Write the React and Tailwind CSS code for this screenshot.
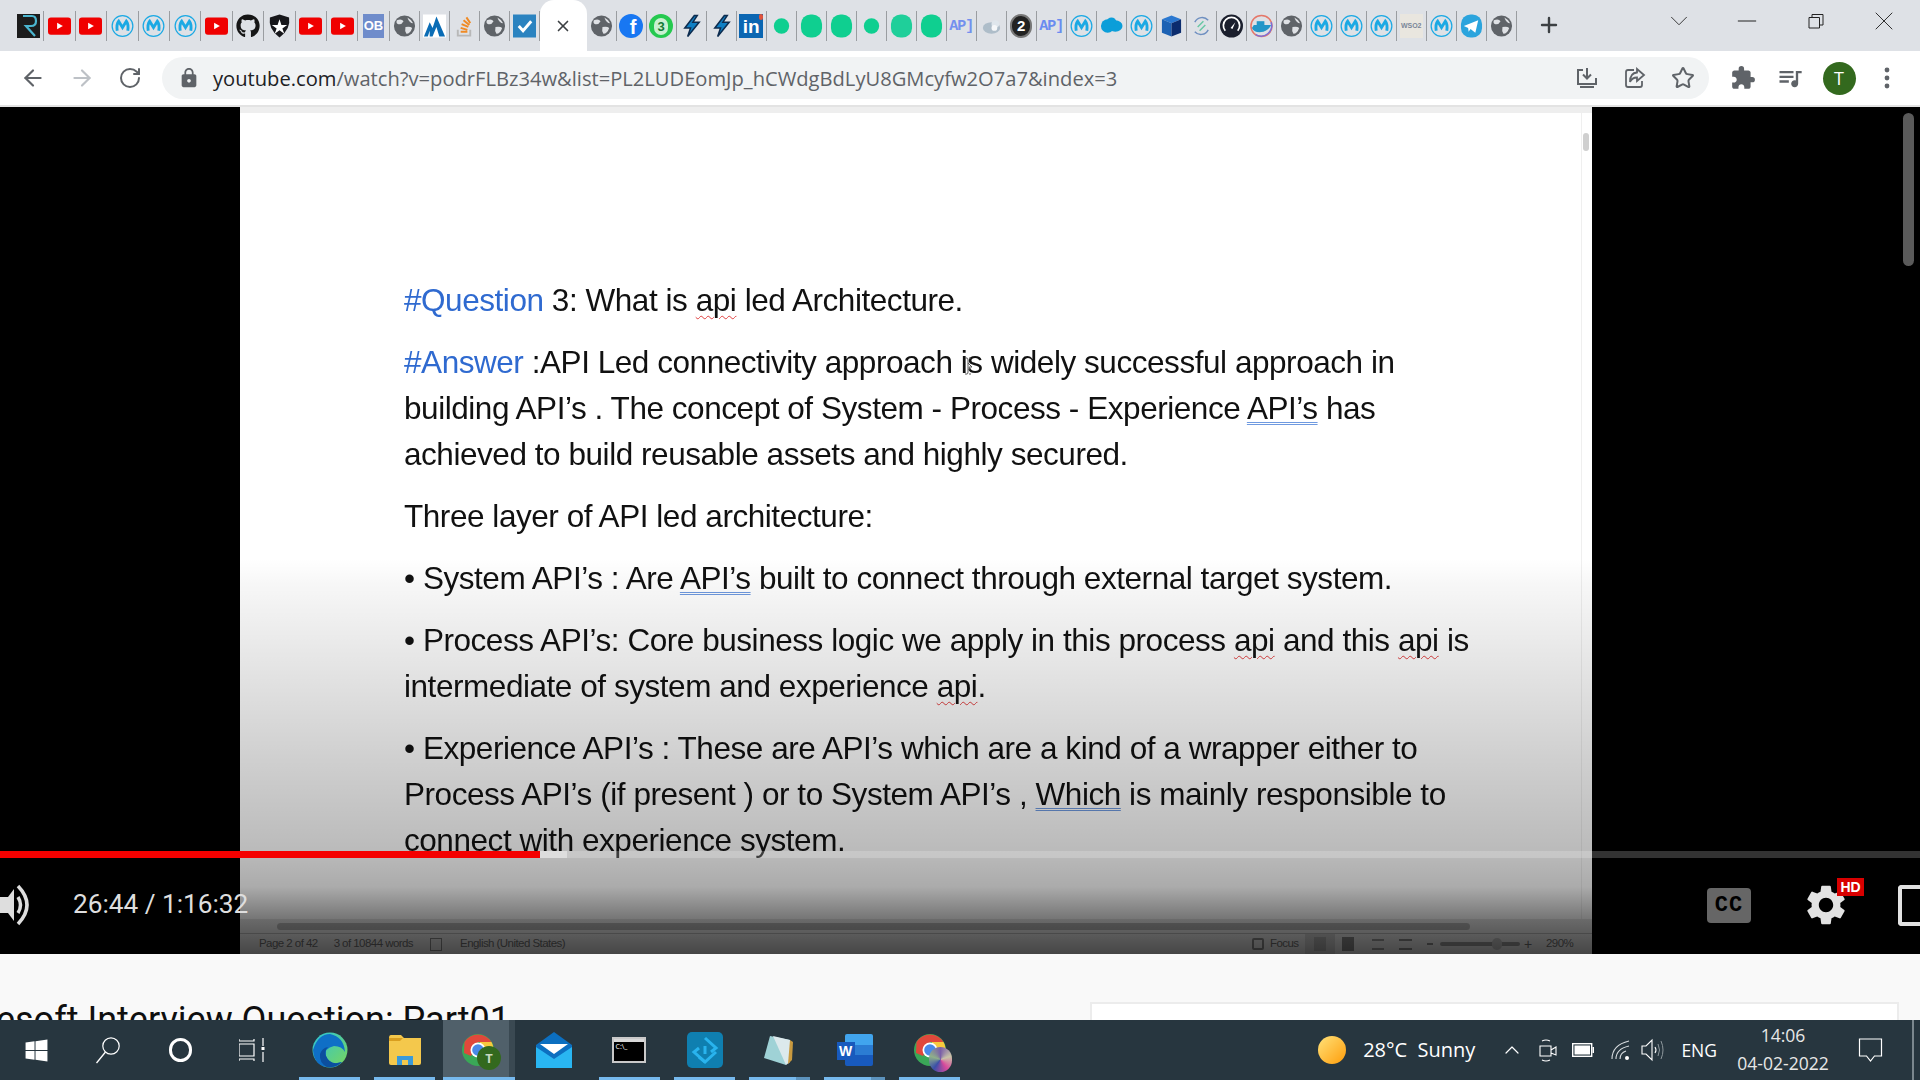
import React from "react";
import { ArrowLeft, ArrowRight, RotateCw, Star, ChevronUp, Minus, X, Plus, ChevronDown } from "lucide-react";
import { FaGithub, FaWindows } from "react-icons/fa";
import { MdQueueMusic, MdSettings, MdLock, MdExtension } from "react-icons/md";

const S = ({ children, vb = "0 0 24 24", cls = "w-[23px] h-[24px]" }) => (
  <svg viewBox={vb} className={cls}>{children}</svg>
);

const Mule = () => (
  <S>
    <circle cx="12" cy="12" r="10.8" fill="none" stroke="#1ba9e4" strokeWidth="1.3" />
    <path d="M6.5 17 Q5.5 10 8 7 L12 13.5 L16 7 Q18.5 10 17.5 17" fill="none" stroke="#1ba9e4" strokeWidth="3" />
  </S>
);
const Yt = () => (
  <S>
    <rect x="0" y="3" width="24" height="18" rx="3" fill="#f00000" />
    <polygon points="9.5,8.5 9.5,15.5 15.5,12" fill="#fff" />
  </S>
);
const Globe = () => (
  <S>
    <circle cx="12" cy="12" r="11" fill="#5f6368" />
    <path d="M4 6 Q9 4 11 7 Q9 11 5 10 Q3 9 4 6Z M13 13 Q18 12 20 14 Q18 20 14 20 Q12 17 13 13Z M15 3 Q19 5 21 9 Q17 9 15 3Z" fill="#dfe1e5" />
  </S>
);
const DotS = () => <S><circle cx="12" cy="12" r="8" fill="#0fcf90" /></S>;
const DotL = ({ c = "#0fcf90" }) => <S><rect x="1" y="0" width="22" height="24" rx="10" fill={c} /></S>;
const Api = ({ c = "#7390ee" }) => (
  <span className="font-['Liberation_Mono',monospace] font-bold text-[15px] tracking-[-1px] leading-none" style={{ color: c }}>AP]</span>
);
const Bolt = () => (
  <S><polygon points="15,1 5,14 11,14 8,23 20,8 13.5,8 18,1" fill="#0f7fc4" stroke="#0d2c4f" strokeWidth="1.6" /></S>
);

const fav = {
  r: () => (
    <div className="w-[23px] h-[24px] bg-[#1c1c1c] flex items-center justify-center">
      <svg viewBox="0 0 23 24" className="w-full h-full"><path d="M6 2 H15 Q19 2 19 7 Q19 12 14 12 H9 L18 22" fill="none" stroke="#4bb6d0" strokeWidth="2.2" /></svg>
    </div>
  ),
  yt: Yt, m: Mule, g: Globe,
  gh: () => <FaGithub className="w-[24px] h-[24px] text-[#161616]" />,
  a0: () => (
    <S><path d="M12 0 L22 3 Q24 15 12 24 Q0 15 2 3Z" fill="#16161a" /><polygon points="12,5 14,11 20,11 15,14.5 17,20 12,16.5 7,20 9,14.5 4,11 10,11" fill="#fff" /></S>
  ),
  ob: () => <div className="w-[21px] h-[24px] bg-[#6f8ccb] text-white font-bold text-[13px] flex items-center justify-center font-['Liberation_Sans',sans-serif]">OB</div>,
  mt: () => (
    <S><rect width="24" height="24" fill="#fff" /><path d="M1 23 L7 8 L10 14 L14 2 L23 23 H17 L14 13 L10 23 H7 L7 17 L5 23Z" fill="#0a6cb5" /></S>
  ),
  so: () => (
    <S><path d="M5 16 V22 H18 V16" fill="none" stroke="#b8b8b8" strokeWidth="2" /><path d="M8 18 H15 M8 14 L15 16 M9 10 L16 13 M11 6 L17 11 M14 3 L18 9" stroke="#f08a24" strokeWidth="2" /></S>
  ),
  ck: () => (
    <S><rect width="24" height="24" fill="#2b83c0" /><path d="M6 12 L10.5 17 L19 7" fill="none" stroke="#fff" strokeWidth="3" /></S>
  ),
  fb: () => (
    <div className="w-[24px] h-[24px] rounded-full bg-[#1877f2] text-white font-bold text-[20px] leading-[26px] pl-[4px] text-center font-['Liberation_Sans',sans-serif]">f</div>
  ),
  wa: () => (
    <div className="w-[24px] h-[24px] rounded-full bg-[#25c94f] flex items-center justify-center">
      <div className="w-[14px] h-[17px] rounded-full bg-[#c9f0d0] text-[#137a33] font-bold text-[13px] leading-[17px] text-center font-['Liberation_Sans',sans-serif]">3</div>
    </div>
  ),
  b: Bolt,
  li: () => (
    <div className="relative w-[24px] h-[24px] bg-[#0b66b2] text-white font-bold text-[19px] leading-[25px] text-center font-['Liberation_Sans',sans-serif]">
      in<span className="absolute top-0 right-0 w-[4px] h-[6px] bg-[#e0533c] rounded-full" />
    </div>
  ),
  ds: DotS, dl: DotL,
  dl2: () => <DotL c="#1fcf9a" />,
  api: Api,
  api2: () => <Api c="#6a8cf0" />,
  cl: () => (
    <S><ellipse cx="12" cy="14" rx="9" ry="6" fill="#aebdc9" /><ellipse cx="16" cy="10" rx="4" ry="4" fill="#dfe6ec" /><circle cx="15" cy="14" r="3" fill="#f5f7f9" /></S>
  ),
  two: () => (
    <div className="w-[22px] h-[24px] rounded-full bg-[#222] text-white font-bold text-[15px] leading-[20px] text-center font-['Liberation_Sans',sans-serif] border-2 border-[#777]">2</div>
  ),
  sf: () => (
    <S><ellipse cx="8" cy="12" rx="7" ry="7" fill="#0b9ed9" /><ellipse cx="16" cy="12" rx="7.5" ry="6" fill="#0b9ed9" /><circle cx="12" cy="8" r="5" fill="#0b9ed9" /></S>
  ),
  cb: () => (
    <S><polygon points="12,1 22,5 12,9 2,5" fill="#2b78d0" /><polygon points="2,5 12,9 12,23 2,19" fill="#1d62b4" /><polygon points="22,5 12,9 12,23 22,19" fill="#0b2c6e" /></S>
  ),
  sw: () => (
    <S><path d="M5 8 A9 10 0 0 1 19 6" fill="none" stroke="#6e8fc0" strokeWidth="1.5" /><path d="M19 16 A9 10 0 0 1 5 18" fill="none" stroke="#6e8fc0" strokeWidth="1.5" /><path d="M8 13 L14 7 M10 17 L16 11" stroke="#67c7a4" strokeWidth="1.5" /></S>
  ),
  ga: () => (
    <S><circle cx="12" cy="12" r="12" fill="#1b1f2d" /><path d="M5.5 17 A8.5 8.5 0 1 1 18.5 17" fill="none" stroke="#fff" strokeWidth="1.8" /><path d="M11 14 L16 8 L13 15Z" fill="#fff" /></S>
  ),
  dk: () => (
    <S><circle cx="12" cy="12" r="11" fill="none" stroke="#e5786a" strokeWidth="1.6" /><path d="M22 8 A11 11 0 0 1 6 21" fill="none" stroke="#7c6fd6" strokeWidth="1.6" /><path d="M2 14 Q5 20 14 18 Q20 16 22 11 H4Z" fill="#2496c8" /><rect x="7" y="7" width="8" height="4" fill="#2496c8" /></S>
  ),
  ws: () => (
    <div className="w-[23px] h-[24px] bg-[#e9e6df] text-[#7a869a] text-[7px] leading-[24px] text-center font-['Liberation_Sans',sans-serif] font-bold">WSO2</div>
  ),
  tg: () => (
    <S><rect width="22" height="24" x="1" rx="10" fill="#2ba4dd" /><polygon points="4,12 19,6 16,19 11,15 9,18 8.5,14" fill="#fff" /></S>
  ),
};

const tabsA = ["r", "yt", "yt", "m", "m", "m", "yt", "gh", "a0", "yt", "yt", "ob"];
const tabsB = ["g", "mt", "so", "g", "ck"];
const tabsC = ["g", "fb", "wa", "b", "b", "li", "ds", "dl", "dl", "ds", "dl2", "dl", "api", "cl", "two", "api2", "m", "sf", "m", "cb", "sw", "ga", "dk", "g", "m", "m", "m", "ws", "m", "tg", "g"];

function Tab({ k, wide }) {
  const I = fav[k];
  return (
    <div className={`${wide ? "w-[31.4px]" : "w-[30px]"} h-[30px] border-r border-[#9a9da1] flex items-center justify-center shrink-0`}>
      <I />
    </div>
  );
}

function TabStrip() {
  return (
    <div className="h-[51px] bg-[#dee1e6] flex items-start pl-[13px] shrink-0">
      <div className="flex mt-[11px]">
        {tabsA.map((k, i) => <Tab key={i} k={k} wide />)}
        {tabsB.map((k, i) => <Tab key={i} k={k} />)}
      </div>
      <div className="w-[47px] h-[51px] bg-white rounded-t-[14px] flex items-center justify-center shrink-0">
        <X className="w-[18px] h-[18px] text-[#3c4043]" strokeWidth={2.2} />
      </div>
      <div className="flex mt-[11px]">
        {tabsC.map((k, i) => <Tab key={i} k={k} />)}
      </div>
      <div className="ml-[20px] mt-[13px] w-[24px] flex justify-center"><Plus className="w-[24px] h-[24px] text-[#3c4043]" strokeWidth={2.4} /></div>
      <div className="flex items-center mt-[5px] ml-[84px] text-[#222]">
        <div className="w-[68.5px] flex justify-center"><ChevronDown className="w-[30px] h-[30px]" strokeWidth={0.7} /></div>
        <div className="w-[68.5px] flex justify-center"><Minus className="w-[30px] h-[30px]" strokeWidth={0.8} /></div>
        <div className="w-[68.5px] flex justify-center"><svg viewBox="0 0 16 16" className="w-[16px] h-[18px]"><path d="M1 4.5 H11.5 V15 H1Z M4 4.5 V1.5 H15 V12 H11.5" fill="none" stroke="#222" strokeWidth="1" /></svg></div>
        <div className="w-[68.5px] flex justify-center"><X className="w-[32px] h-[32px]" strokeWidth={0.7} /></div>
      </div>
    </div>
  );
}

function Toolbar() {
  return (
    <div className="h-[56px] bg-white border-b-2 border-[#e3e3e3] flex items-start shrink-0 relative">
      <div className="flex items-center pl-[20px] gap-[23px] h-[54px] text-[#5f6368]">
        <ArrowLeft className="w-[26px] h-[26px]" strokeWidth={2} />
        <ArrowRight className="w-[26px] h-[26px] text-[#bdc1c6]" strokeWidth={2} />
        <RotateCw className="w-[24px] h-[24px]" strokeWidth={2} />
      </div>
      <div className="ml-[20px] mt-[6px] w-[1547px] h-[42px] rounded-full bg-[#f1f3f4] flex items-center pl-[16px] shrink-0">
        <MdLock className="w-[22px] h-[22px] text-[#5f6368]" />
        <span className="ml-[13px] text-[20.15px] font-['Open_Sans',sans-serif] text-[#5f6368] whitespace-nowrap">
          <span className="text-[#202124]">youtube.com</span>/watch?v=podrFLBz34w&amp;list=PL2LUDEomJp_hCWdgBdLyU8GMcyfw2O7a7&amp;index=3
        </span>
        <div className="ml-auto flex items-center gap-[24px] pr-[14px] text-[#5f6368]">
          <svg viewBox="0 0 24 24" className="w-[24px] h-[24px]"><path d="M8 4 H3 V18 H21 V12 M12 2 V12 M8 8.5 L12 12.5 L16 8.5 M5 21 H19" fill="none" stroke="#5f6368" strokeWidth="2" /></svg>
          <svg viewBox="0 0 24 24" className="w-[24px] h-[24px]"><path d="M11 4 H5 Q3 4 3 6 V19 Q3 21 5 21 H17 Q19 21 19 19 V15 M14 3 L21 9 L14 15 V11.5 Q9 11.5 7 16 Q7 7 14 6.5Z" fill="none" stroke="#5f6368" strokeWidth="1.8" /></svg>
          <Star className="w-[24px] h-[24px]" strokeWidth={2} />
        </div>
      </div>
      <div className="flex items-center h-[54px] pl-[21px] text-[#5f6368]">
        <MdExtension className="w-[26px] h-[26px]" />
        <MdQueueMusic className="w-[28px] h-[28px] ml-[20px]" />
        <div className="ml-[18.5px] w-[33px] h-[33px] rounded-full bg-[#33691e] text-white text-[18px] flex items-center justify-center font-['Open_Sans',sans-serif]">T</div>
        <svg viewBox="0 0 6 24" className="w-[6px] h-[24px] ml-[28.5px]"><circle cx="3" cy="4" r="2.4" fill="#5f6368" /><circle cx="3" cy="12" r="2.4" fill="#5f6368" /><circle cx="3" cy="20" r="2.4" fill="#5f6368" /></svg>
      </div>
    </div>
  );
}

const Red = ({ children }) => <span className="underline decoration-wavy decoration-[#e04040] decoration-[1px] underline-offset-[4px]">{children}</span>;
const Blu = ({ children }) => <span className="underline decoration-double decoration-[#6f9ae0] decoration-[1px] underline-offset-[3px]">{children}</span>;
const Tag = ({ children }) => <span className="text-[#2f6ad0]">{children}</span>;

function DocText() {
  return (
    <div className="flex-1 pl-[164px] pt-[164px] text-[31.5px] leading-[46px] text-[#111] font-['Liberation_Sans',Arial,sans-serif] whitespace-nowrap overflow-hidden blur-[0.35px] tracking-[-0.45px]">
      <p className="mb-[16px]"><Tag>#Question</Tag> 3: What is <Red>api</Red> led Architecture.</p>
      <p className="mb-[16px]"><Tag>#Answer</Tag> :API Led connectivity approach is widely successful approach in<br />building API’s . The concept of System - Process - Experience <Blu>API’s</Blu> has<br />achieved to build reusable assets and highly secured.</p>
      <p className="mb-[16px]">Three layer of API led architecture:</p>
      <p className="mb-[16px]">• System API’s : Are <Blu>API’s</Blu> built to connect through external target system.</p>
      <p className="mb-[16px]">• Process API’s: Core business logic we apply in this process <Red>api</Red> and this <Red>api</Red> is<br />intermediate of system and experience <Red>api</Red>.</p>
      <p>• Experience API’s : These are API’s which are a kind of a wrapper either to<br />Process API’s (if present ) or to System API’s , <Blu>Which</Blu> is mainly responsible to<br />connect with experience system.</p>
    </div>
  );
}

function DocStatus() {
  return (
    <div className="h-[21px] border-t border-[#bbb] bg-[#eaeaea] flex items-center text-[11.5px] tracking-[-0.55px] text-[#6e6e6e] font-['Liberation_Sans',sans-serif] whitespace-nowrap pl-[19px] shrink-0">
      <span>Page 2 of 42</span>
      <span className="ml-[16px]">3 of 10844 words</span>
      <span className="ml-[17px] w-[12px] h-[13px] border border-[#8a8a8a]" />
      <span className="ml-[18px]">English (United States)</span>
      <div className="ml-auto flex items-center h-full pr-[19px]">
        <span className="w-[12px] h-[12px] border-2 border-[#8a8a8a] rounded-[2px] mr-[6px]" />
        <span className="w-[26px]">Focus</span>
        <div className="ml-[9px] w-[30px] h-full bg-[#cfcfcf] flex items-center justify-center">
          <span className="w-[12px] h-[14px] bg-[#b0b0b0]" />
        </div>
        <span className="ml-[7px] w-[12px] h-[14px] bg-[#8a8a8a]" />
        <span className="ml-[18px] w-[12px] h-[11px] border-y-2 border-[#9a9a9a]" />
        <span className="ml-[15px] w-[13px] h-[11px] border-y-2 border-[#8a8a8a]" />
        <span className="ml-[15px] w-[6px] h-[2px] bg-[#8a8a8a]" />
        <div className="ml-[7px] w-[80px] h-[4px] bg-[#9a9a9a] rounded relative">
          <span className="absolute left-[52px] -top-[4px] w-[10px] h-[12px] rounded-full bg-[#c4c4c4]" />
        </div>
        <span className="ml-[4px] w-[8px] text-[14px] leading-none">+</span>
        <span className="ml-[14px] w-[27px]">290%</span>
      </div>
    </div>
  );
}

function VideoControls() {
  return (
    <div className="absolute left-0 right-0 bottom-0 h-[103px] text-[#dedede]">
      <div className="h-[7px] bg-white/20 flex">
        <div className="w-[540px] bg-[#f40000]" />
        <div className="w-[27px] bg-white/40" />
      </div>
      <div className="h-[96px] flex items-center pb-[2px]">
        <svg viewBox="0 0 31 44" className="w-[31px] h-[44px] shrink-0"><polygon points="0,14 8,14 14,6 14,38 8,30 0,30" fill="#dedede" /><path d="M18 14 Q23 22 18 30" fill="none" stroke="#dedede" strokeWidth="3.5" /><path d="M18 3 Q36 22 18 41" fill="none" stroke="#dedede" strokeWidth="3.5" /></svg>
        <span className="ml-[42px] text-[26.2px] font-['Roboto',sans-serif] whitespace-nowrap">26:44 / 1:16:32</span>
        <div className="ml-auto w-[44px] h-[35px] rounded-[4px] bg-[#666] text-black font-['Liberation_Mono',monospace] font-bold text-[22px] tracking-[1px] flex items-center justify-center">CC</div>
        <div className="relative ml-[53px] w-[44px] h-[44px] shrink-0">
          <MdSettings className="w-[48px] h-[48px] -m-[2px] text-[#e2e2e2]" />
          <span className="absolute -top-[5px] left-[33px] w-[27px] h-[18px] bg-[#d80000] text-white text-[14px] leading-[18px] font-bold text-center font-['Liberation_Sans',sans-serif]">HD</span>
        </div>
        <div className="ml-[50px] w-[22px] h-[41px] border-[4px] border-r-0 border-[#e2e2e2] rounded-l-[4px] shrink-0" />
      </div>
    </div>
  );
}

function Video() {
  return (
    <div className="relative h-[847px] bg-black flex shrink-0 overflow-hidden">
      <div className="ml-[240px] w-[1352px] bg-white border-t-[6px] border-[#eeeeee] flex flex-col relative">
        <DocText />
        <div className="h-[14px] bg-[#e8e8e8] flex items-center pl-[37px] pr-[122px] shrink-0">
          <div className="w-full h-[7px] bg-[#b4b4b4] rounded-full" />
        </div>
        <DocStatus />
        <div className="absolute top-[20px] right-[3px] w-[6px] h-[18px] bg-[#cfcfcf] rounded-sm" />
        <div className="absolute top-0 right-[10px] bottom-[35px] border-r border-[#efefef]" />
        <svg viewBox="0 0 10 18" className="absolute left-[723px] top-[244px] w-[10px] h-[18px]"><path d="M2 1 H4 Q5 1 5 3 V15 Q5 17 4 17 H2 M8 1 H6 M8 17 H6 M5 6 L9 10 H6 L7 13" fill="none" stroke="#555" strokeWidth="1" /></svg>
        <div className="absolute inset-0 bg-[linear-gradient(to_bottom,transparent_0%,transparent_53%,rgba(0,0,0,0.03)_56%,rgba(0,0,0,0.27)_88%,rgba(0,0,0,0.33)_92%,rgba(0,0,0,0.55)_96%,rgba(0,0,0,0.7)_100%)]" />
      </div>
      <VideoControls />
      <div className="absolute top-[6px] right-[6px] w-[11px] h-[153px] rounded-full bg-[#5a5a5a]" />
    </div>
  );
}

function PageBelow() {
  return (
    <div className="h-[66px] bg-[#f9f9f9] flex shrink-0 overflow-hidden relative">
      <div className="w-[1090px] shrink-0 overflow-hidden">
        <div className="flex justify-end w-[510px] mt-[45px]">
          <span className="text-[36px] leading-[42px] text-[#0f0f0f] font-['Roboto',sans-serif] whitespace-nowrap">Mulesoft Interview Question: Part01</span>
        </div>
      </div>
      <div className="mt-[48px] w-[809px] h-[40px] bg-white border-2 border-[#ececec] shrink-0" />
    </div>
  );
}

/* taskbar icons */
const Chrome = ({ badge }) => (
  <div className="relative w-[34px] h-[36px]">
    <svg viewBox="0 0 34 36" className="w-[34px] h-[36px]">
      <circle cx="17" cy="18" r="16" fill="#3aa757" />
      <path d="M3.5 10 A16 16 0 0 1 30.5 10 L17 10Z" fill="#e0483b" />
      <path d="M3.5 10 L17 10 L10 24 L3 21 Z" fill="#e0483b" />
      <path d="M30.5 10 A16 16 0 0 1 24 32 L17 18 L19 10Z" fill="#f7c93e" />
      <circle cx="17" cy="18" r="7.5" fill="#fff" />
      <circle cx="17" cy="18" r="5.8" fill="#4a89e8" />
    </svg>
    {badge}
  </div>
);

function TaskSlot({ w, under = true, partial, active, children }) {
  return (
    <div className={`relative h-[60px] flex items-center justify-center shrink-0 ${active ? "bg-[#50606a]" : ""}`} style={{ width: w }}>
      {children}
      {active && <span className="absolute right-0 top-0 bottom-0 w-[6px] bg-[#3a4952]" />}
      {under && <span className="absolute left-0 right-0 bottom-0 h-[3px] bg-[#76b9ed]" />}
      {partial && <span className="absolute right-0 bottom-0 w-[14px] h-[3px] bg-[#5c93bd]" />}
    </div>
  );
}

function Taskbar() {
  return (
    <div className="h-[60px] bg-[#27363f] flex items-center text-white shrink-0 font-['Open_Sans',sans-serif]">
      <div className="w-[72px] flex justify-center"><FaWindows className="w-[25px] h-[25px]" /></div>
      <div className="w-[72px] flex justify-center">
        <svg viewBox="0 0 26 28" className="w-[26px] h-[28px]"><circle cx="16" cy="10" r="8.2" fill="none" stroke="#fff" strokeWidth="1.2" /><path d="M10.5 16 L1.5 27" stroke="#fff" strokeWidth="1.3" /></svg>
      </div>
      <div className="w-[72px] flex justify-center"><span className="w-[23px] h-[24px] rounded-full border-[3.5px] border-white" /></div>
      <div className="w-[72px] flex justify-center">
        <svg viewBox="0 0 26 24" className="w-[26px] h-[24px]"><path d="M0 1 V3 H15 V1 M0 23 V21 H15 V23 M0 6 H15 V18 H0Z M24 0 V8 M24 14 V24" fill="none" stroke="#fff" strokeWidth="1.2" /><rect x="22.5" y="9" width="3" height="3" fill="#fff" /></svg>
      </div>
      <div className="w-[11px] shrink-0" />
      <TaskSlot w={61}>
        <svg viewBox="0 0 36 36" className="w-[36px] h-[36px]">
          <defs><linearGradient id="e1" x1="0" y1="0" x2="1" y2="1"><stop offset="0" stopColor="#2bc3d8" /><stop offset="1" stopColor="#7ad75a" /></linearGradient></defs>
          <circle cx="18" cy="18" r="17.5" fill="url(#e1)" />
          <path d="M1 18 Q2 35 18 35.5 Q26 35 30 30 Q18 34 14 24 Q12 16 22 14 Q30 14 33 20 Q32 5 18 2 Q6 2 1 18Z" fill="#0f6fc6" />
          <path d="M14 24 Q18 34 30 30 Q24 36 15 35 Q7 31 8 22 Q10 16 16 15 Q12 19 14 24Z" fill="#0c4f9e" />
        </svg>
      </TaskSlot>
      <div className="w-[14px] shrink-0" />
      <TaskSlot w={61}>
        <svg viewBox="0 0 32 32" className="w-[32px] h-[32px]"><path d="M0 4 Q0 1 2 1 H12 L15 4 H32 V29 Q32 31 30 31 H2 Q0 31 0 29Z" fill="#f4c84c" /><path d="M0 4 H14 L11 7 H0Z" fill="#d99e1f" /><path d="M8 31 V22 H24 V31 H19 V26 H13 V31Z" fill="#3b9ad9" /></svg>
      </TaskSlot>
      <div className="w-[8px] shrink-0" />
      <TaskSlot w={72} active>
        <div className="-ml-[2px]">
          <Chrome badge={<span className="absolute -right-[6px] -bottom-[2px] w-[24px] h-[24px] rounded-full bg-[#33691e] text-[#c8d8c0] text-[13px] font-bold text-center leading-[24px]">T</span>} />
        </div>
      </TaskSlot>
      <TaskSlot w={84} under={false}>
        <svg viewBox="0 0 36 36" className="w-[36px] h-[36px] -ml-[6px]"><polygon points="0,13 18,0 36,13 36,36 0,36" fill="#0c6fc0" /><polygon points="4,12 32,12 18,22" fill="#fff" /><polygon points="0,15 18,27 36,15 36,36 0,36" fill="#29b6f2" /></svg>
      </TaskSlot>
      <div className="flex gap-[14px] h-[60px]">
        <TaskSlot w={61}>
          <div className="w-[34px] h-[26px] relative border-2 border-[#c9c9c9] bg-black -ml-[2px]">
            <div className="h-[3px] bg-[#d9d9d9]" />
            <span className="absolute left-[2px] top-[4px] text-[7px] leading-none text-white">C:\_</span>
          </div>
        </TaskSlot>
        <TaskSlot w={61}>
          <svg viewBox="0 0 36 36" className="w-[36px] h-[36px]"><rect width="36" height="36" rx="5" fill="#0f7fb0" /><path d="M18 6 L29 16 L24 20 M18 30 L7 20 L12 16 M18 14 V22" fill="none" stroke="#29b4ee" strokeWidth="3" /><path d="M12 25 L18 30 L29 20" fill="none" stroke="#29b4ee" strokeWidth="3" /></svg>
        </TaskSlot>
        <TaskSlot w={61} partial>
          <svg viewBox="0 0 32 32" className="w-[32px] h-[32px] -ml-[4px]"><polygon points="8,2 28,6 24,31 2,24" fill="#9fd2d6" /><polygon points="11,2 28,6 28,28 24,31" fill="#dce9ec" /><polygon points="28,6 31,8 30,26 26,30" fill="#c99a3f" /></svg>
        </TaskSlot>
        <TaskSlot w={61} partial>
          <div className="relative w-[36px] h-[32px]">
            <div className="absolute right-0 top-0 w-[28px] h-[32px] rounded-[2px] bg-[linear-gradient(to_bottom,#41a5ee_0%,#41a5ee_33%,#2b7cd3_33%,#2b7cd3_66%,#185abd_66%)]" />
            <div className="absolute left-0 top-[8px] w-[18px] h-[18px] bg-[#185abd] text-white text-[14px] font-bold leading-[18px] text-center font-['Liberation_Sans',sans-serif]">W</div>
          </div>
        </TaskSlot>
        <TaskSlot w={61}>
          <Chrome badge={<span className="absolute -right-[5px] -bottom-[4px] w-[23px] h-[25px] rounded-full bg-[conic-gradient(#7a5fa8,#c9c4a8,#d84a9c,#3a4fa8,#8fb08a,#7a5fa8)]" />} />
        </TaskSlot>
      </div>

      <div className="ml-auto flex items-center h-full">
        <span className="w-[28px] h-[28px] rounded-full bg-[linear-gradient(135deg,#ffe27a,#ff9d0a)] shrink-0" />
        <span className="ml-[17.5px] text-[20px] whitespace-nowrap">28°C&nbsp; Sunny</span>
        <ChevronUp className="ml-[24.5px] w-[24px] h-[24px]" strokeWidth={1.2} />
        <svg viewBox="0 0 18 24" className="ml-[15px] w-[18px] h-[24px]"><path d="M1 8 H12 V18 H1Z M12 12 L17 9 V17 L12 15 M3 3 Q7 1 11 3 M3 22 Q7 24 11 22" fill="none" stroke="#fff" strokeWidth="1.1" /></svg>
        <svg viewBox="0 0 22 14" className="ml-[15px] w-[22px] h-[14px]"><rect x="0.7" y="0.7" width="19" height="12.6" fill="none" stroke="#fff" strokeWidth="1.4" /><rect x="2.5" y="2.5" width="15.5" height="9" fill="#fff" /><rect x="20.5" y="4" width="1.5" height="6" fill="#fff" /></svg>
        <svg viewBox="0 0 20 20" className="ml-[17.5px] w-[20px] h-[20px]"><path d="M1 19 Q1 5 18 1 M5 19 Q5 9 18 6 M9 19 Q9 13 15 11" fill="none" stroke="#d8dde0" strokeWidth="1.1" /><circle cx="16" cy="18" r="2" fill="#fff" /></svg>
        <svg viewBox="0 0 24 24" className="ml-[10px] w-[24px] h-[24px]"><path d="M1 8 H5 L11 2 V22 L5 16 H1Z M14 9 Q16 12 14 15" fill="none" stroke="#fff" strokeWidth="1.1" /><path d="M17 6 Q20 12 17 18 M20 3 Q24 12 20 21" fill="none" stroke="#8d979c" strokeWidth="1" /></svg>
        <span className="ml-[16px] text-[17.5px] whitespace-nowrap">ENG</span>
        <div className="ml-[18px] w-[96px] flex flex-col items-center text-[#e8e8e8] text-[17.5px] leading-[28px] whitespace-nowrap">
          <span className="-mt-[2px]">14:06</span>
          <span>04-02-2022</span>
        </div>
        <svg viewBox="0 0 24 24" className="ml-[27px] w-[25px] h-[24px]"><path d="M1 1 H23 V18 H16 L12 23 L8 18 H1Z" fill="none" stroke="#fff" strokeWidth="1.2" /></svg>
        <span className="ml-[29px] mr-[6px] w-[2px] h-full bg-[#7b878e]" />
      </div>
    </div>
  );
}

export default function App() {
  return (
    <div className="w-[1920px] h-[1080px] overflow-hidden flex flex-col bg-white relative">
      <TabStrip />
      <Toolbar />
      <Video />
      <PageBelow />
      <Taskbar />
    </div>
  );
}
